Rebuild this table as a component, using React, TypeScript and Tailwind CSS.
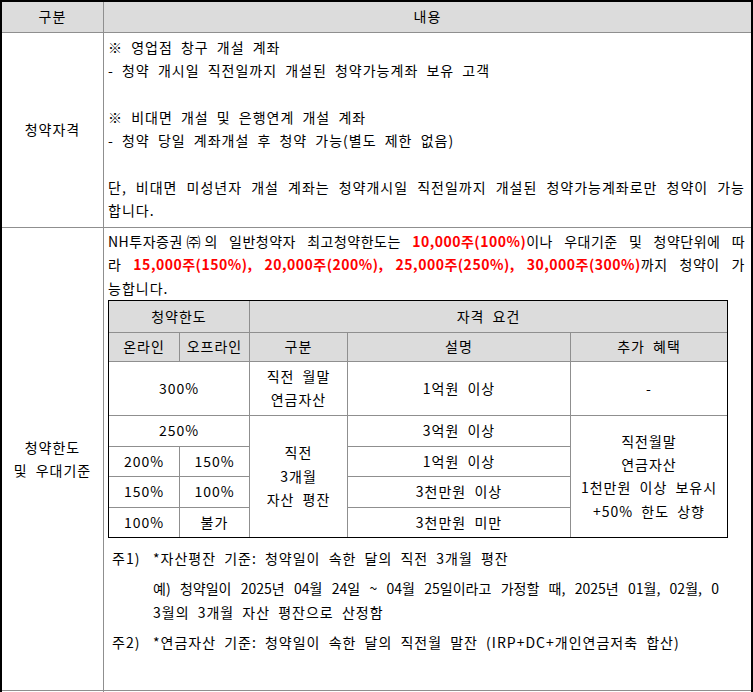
const headCell = "bg-[#dcdcdc] flex items-center justify-center text-center";
const bodyCell = "bg-white flex items-center justify-center text-center";
const justifyLine = "whitespace-nowrap text-justify [text-align-last:justify]";

function LimitTable() {
  return (
    <div className="grid w-[620px] grid-cols-[70px_69px_97px_222px_156px] grid-rows-[31px_28px_53px_30px_29px_30px_29px] gap-px border border-black bg-[#8f8f8f]">
      <div className={`${headCell} col-span-2`}>청약한도</div>
      <div className={`${headCell} col-span-3`}>자격 요건</div>
      <div className={headCell}>온라인</div>
      <div className={headCell}>오프라인</div>
      <div className={headCell}>구분</div>
      <div className={headCell}>설명</div>
      <div className={headCell}>추가 혜택</div>

      <div className={`${bodyCell} col-span-2`}>300%</div>
      <div className={bodyCell}>
        직전 월말
        <br />
        연금자산
      </div>
      <div className={bodyCell}>1억원 이상</div>
      <div className={bodyCell}>-</div>

      <div className={`${bodyCell} col-span-2`}>250%</div>
      <div className={`${bodyCell} row-span-4`}>
        직전
        <br />
        3개월
        <br />
        자산 평잔
      </div>
      <div className={bodyCell}>3억원 이상</div>
      <div className={`${bodyCell} row-span-4`}>
        직전월말
        <br />
        연금자산
        <br />
        1천만원 이상 보유시
        <br />
        +50% 한도 상향
      </div>

      <div className={bodyCell}>200%</div>
      <div className={bodyCell}>150%</div>
      <div className={bodyCell}>1억원 이상</div>

      <div className={bodyCell}>150%</div>
      <div className={bodyCell}>100%</div>
      <div className={bodyCell}>3천만원 이상</div>

      <div className={bodyCell}>100%</div>
      <div className={bodyCell}>불가</div>
      <div className={bodyCell}>3천만원 미만</div>
    </div>
  );
}

export default function App() {
  return (
    <div className="w-[753px] bg-white font-['Noto_Sans_CJK_KR',sans-serif] text-[14px] leading-[23.33px] tracking-[1px] text-black [word-spacing:4px]">
      <div className="grid grid-cols-[101px_647px] grid-rows-[30px_194px_462px_40px] gap-px border-2 border-b-0 border-black bg-[#8f8f8f]">
        {/* header */}
        <div className={headCell}>구분</div>
        <div className={headCell}>내용</div>

        {/* 청약자격 */}
        <div className={bodyCell}>청약자격</div>
        <div className="bg-white pl-[4px] pr-[6px] pt-[3px]">
          <p>※ 영업점 창구 개설 계좌</p>
          <p>- 청약 개시일 직전일까지 개설된 청약가능계좌 보유 고객</p>
          <p>&nbsp;</p>
          <p>※ 비대면 개설 및 은행연계 개설 계좌</p>
          <p>- 청약 당일 계좌개설 후 청약 가능(별도 제한 없음)</p>
          <p>&nbsp;</p>
          <p className={justifyLine}>
            단, 비대면 미성년자 개설 계좌는 청약개시일 직전일까지 개설된 청약가능계좌로만 청약이 가능
          </p>
          <p>합니다.</p>
        </div>

        {/* 청약한도 및 우대기준 */}
        <div className={bodyCell}>
          청약한도
          <br />
          및 우대기준
        </div>
        <div className="bg-white pl-[4px] pr-[6px] pt-[2px]">
          <p className={`${justifyLine} tracking-[0.5px]`}>
            NH투자증권㈜의 일반청약자 최고청약한도는{" "}
            <b className="text-[#ff0000]">10,000주(100%)</b>이나 우대기준 및 청약단위에 따
          </p>
          <p className={`${justifyLine} tracking-[0.5px]`}>
            라{" "}
            <b className="text-[#ff0000]">
              15,000주(150%), 20,000주(200%), 25,000주(250%), 30,000주(300%)
            </b>
            까지 청약이 가
          </p>
          <p>능합니다.</p>

          <LimitTable />

          <div className="mt-[9px] pl-[4px]">
            <div className="flex">
              <span className="w-[41px] shrink-0">주1)</span>
              <span>*자산평잔 기준: 청약일이 속한 달의 직전 3개월 평잔</span>
            </div>
            <div className="mt-[7px] w-[607px] pl-[41px]">
              <p className={`${justifyLine} tracking-normal [word-spacing:2px]`}>
                예) 청약일이 2025년 04월 24일 ~ 04월 25일이라고 가정할 때, 2025년 01월, 02월, 0
              </p>
              <p>3월의 3개월 자산 평잔으로 산정함</p>
            </div>
            <div className="mt-[7px] flex">
              <span className="w-[41px] shrink-0">주2)</span>
              <span>*연금자산 기준: 청약일이 속한 달의 직전월 말잔 (IRP+DC+개인연금저축 합산)</span>
            </div>
          </div>
        </div>

        {/* next row, cut off */}
        <div className="bg-white" />
        <div className="bg-white" />
      </div>
    </div>
  );
}
